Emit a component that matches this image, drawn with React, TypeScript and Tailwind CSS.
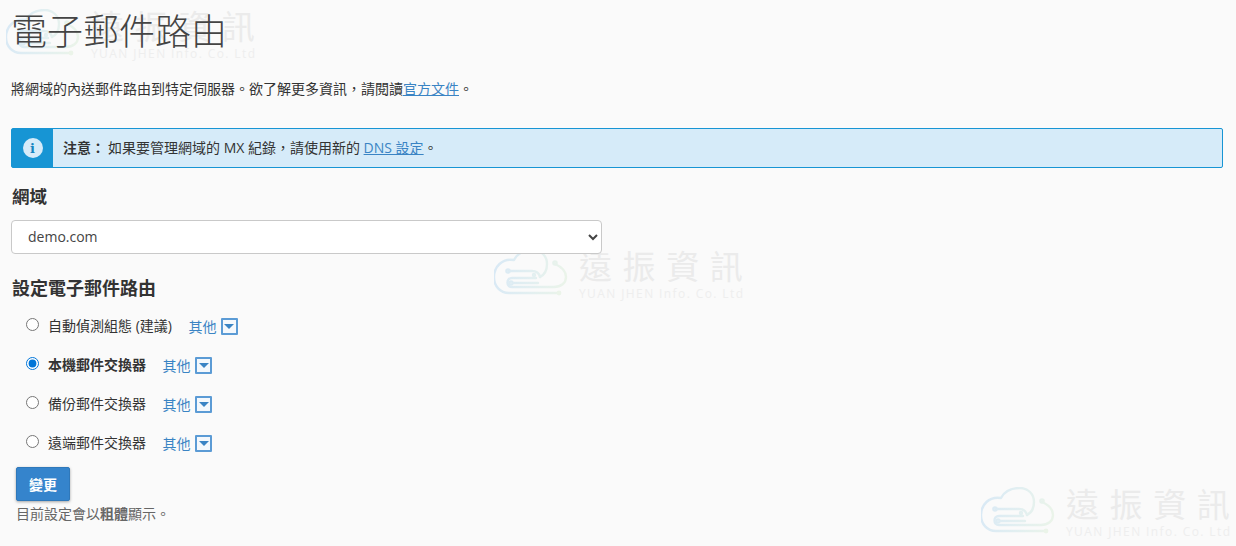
import { useState } from "react";

const font = "font-['Open_Sans','Noto_Sans_CJK_TC',sans-serif]";

const routes = [
  { id: "auto", label: "自動偵測組態", hint: " (建議)" },
  { id: "local", label: "本機郵件交換器" },
  { id: "backup", label: "備份郵件交換器" },
  { id: "remote", label: "遠端郵件交換器" },
];

const Watermark = ({ pos }: { pos: string }) => (
  <div className={`absolute ${pos} pointer-events-none flex items-start gap-[11px] select-none`}>
    <svg width="74" height="50" viewBox="0 0 74 50" fill="none" strokeWidth="2.4" strokeLinecap="round" strokeLinejoin="round" className="mt-px">
      <defs>
        <linearGradient id="wm" gradientUnits="userSpaceOnUse" x1="0" y1="20" x2="74" y2="30">
          <stop offset="0" stopColor="#d9e9f5" />
          <stop offset="0.5" stopColor="#e2eff1" />
          <stop offset="1" stopColor="#ebf4e9" />
        </linearGradient>
      </defs>
      <path d="M46 28C50 26 53 21 53 15C53 7 47 1 39 1C30 1 23 5 20 11C8 9 0 18 0 28C0 37 6 44 15 44H64" stroke="url(#wm)" />
      <path d="M61 15C68 18 72 23 72 28C72 34 67 38 60 38H18C12 38 12 29 18 29H42" stroke="url(#wm)" />
      <path d="M15 22H38C42 22 45 24 46 28" stroke="url(#wm)" />
      <path d="M20 34H44" stroke="url(#wm)" />
      <circle cx="14" cy="22" r="1.6" stroke="url(#wm)" />
      <circle cx="17" cy="34" r="1.6" stroke="url(#wm)" />
      <circle cx="40" cy="26" r="1" stroke="url(#wm)" />
      <circle cx="61" cy="14" r="1.6" stroke="url(#wm)" />
      <circle cx="65" cy="44" r="2.4" fill="#ebf4e9" stroke="none" />
    </svg>
    <div className="flex flex-col">
      <div className="flex gap-[10.6px] text-[33px] leading-[38px] text-[#ebebeb]">
        <span>遠</span>
        <span>振</span>
        <span>資</span>
        <span>訊</span>
      </div>
      <span className="text-[12px] leading-[15px] tracking-[1.4px] text-[#eeeeee] whitespace-nowrap">YUAN JHEN Info. Co. Ltd</span>
    </div>
  </div>
);

const App = () => {
  const [route, setRoute] = useState("local");

  return (
    <div className={`relative h-[546px] overflow-hidden bg-[#fafafa] text-[#333] text-[14px] ${font}`}>
      <Watermark pos="left-[6px] top-[8px]" />
      <Watermark pos="left-[494px] top-[248px]" />
      <Watermark pos="left-[981px] top-[486px]" />

      <div className="relative pl-[11px] pr-[13px]">
        <h1 className="text-[36px] leading-[40px] font-light pt-[12px] text-[#444]">電子郵件路由</h1>
        <p className="mt-[27px] leading-[20px]">
          將網域的內送郵件路由到特定伺服器。欲了解更多資訊，請閱讀<a href="#" className="text-[#3a84c4] underline">官方文件</a>。
        </p>

        <div className="mt-[29px] flex h-[40px] rounded-[2px] border border-[#1795d4] bg-[#d6ebf9]">
          <div className="flex w-[41px] items-center justify-center bg-[#1795d4]">
            <span className="flex h-[20px] w-[20px] items-center justify-center rounded-full bg-[#d6ebf9] font-['DejaVu_Serif',serif] text-[13px] font-bold leading-none text-[#1485c0]">i</span>
          </div>
          <p className="flex items-center pl-[10px] pb-[2px]">
            <strong className="mr-[3px]">注意：</strong>如果要管理網域的 MX 紀錄，請使用新的&nbsp;<a href="#" className="text-[#3a84c4] underline">DNS 設定</a>。
          </p>
        </div>

        <label className="mt-[16px] block pl-px text-[17.5px] font-bold leading-[24px]">網域</label>
        <select className="mt-[12px] block h-[34px] w-[591px] rounded border border-[#c9c9c9] bg-white pl-3 pb-[2px] text-[14px] text-[#444]">
          <option>demo.com</option>
        </select>

        <h2 className="mt-[22px] pl-px text-[18px] font-bold leading-[24px]">設定電子郵件路由</h2>

        <div className="mt-[6px] flex flex-col">
          {routes.map((r) => (
            <div key={r.id} className="flex h-[39px] items-center pl-[15px]">
              <input
                type="radio"
                name="route"
                checked={route === r.id}
                onChange={() => setRoute(r.id)}
                className="m-0 h-[13px] w-[13px] -translate-y-px accent-[#0075d8]"
              />
              <span className={`ml-[9px] ${route === r.id ? "font-bold" : ""}`}>
                {r.label}
                {r.hint}
              </span>
              <a href="#" className="ml-[16.5px] flex items-center text-[#3a84c4] translate-y-px">
                其他
                <span className="ml-[4.5px] flex h-[17px] w-[17px] items-center justify-center rounded-[1px] border-2 border-[#5b9bd5] bg-[#f4f8fc]">
                  <span className="h-0 w-0 border-x-[5px] border-t-[5px] border-x-transparent border-t-[#3a84c4]" />
                </span>
              </a>
            </div>
          ))}
        </div>

        <button className="ml-[5px] mt-[5px] block h-[34px] w-[54px] rounded-[2px] border border-[#2f78ba] bg-[#3584cc] font-bold text-white shadow-[0_1px_3px_rgba(0,0,0,0.35)]">變更</button>
        <p className="ml-[5px] mt-[3px] leading-[20px] text-[#666]">
          目前設定會以<strong>粗體</strong>顯示。
        </p>
      </div>
    </div>
  );
};

export default App;
